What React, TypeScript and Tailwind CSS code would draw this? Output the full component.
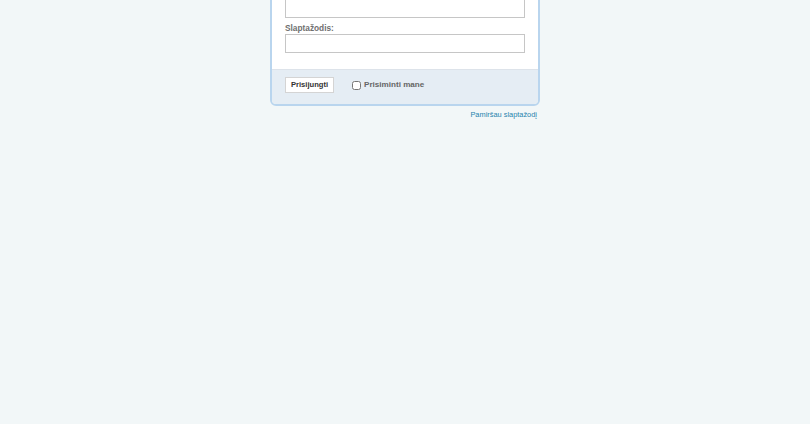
import React from "react";

export default function App() {
  return (
    <div
      className="w-[810px] h-[424px] bg-[#f2f7f8] overflow-hidden"
      style={{ fontFamily: '"Liberation Sans", Arial, sans-serif' }}
    >
      <div className="ml-[270px] w-[270px] -mt-[32px]">
        <div className="border-2 border-[#b9d5ee] rounded-b-[6px] overflow-hidden">
          <div className="bg-white px-[13px] pb-[16px]">
            <div className="h-[29px]"></div>
            <input className="block w-[240px] h-[19px] border border-[#c6c6c6] bg-white outline-none" />
            <label className="block text-[8.3px] leading-[12px] font-bold text-[#6f6f6f] mt-[2px] h-[12px] pt-[2px]">
              Slaptažodis:
            </label>
            <input type="password" className="block w-[240px] h-[19px] border border-[#c6c6c6] bg-white mt-[2px] outline-none" />
          </div>
          <div className="bg-[#e5edf4] border-t border-[#dde3ea] px-[13px] h-[35px] flex items-start pt-[7px]">
            <button className="w-[49px] h-[16px] bg-white border border-[#d4d4d4] text-[7.6px] font-bold text-[#333] leading-[14px] flex justify-center whitespace-nowrap">
              Prisijungti
            </button>
            <label className="flex items-center ml-[18px] mt-[2px] text-[8.1px] font-bold text-[#666] leading-[12px]">
              <input type="checkbox" className="w-[9px] h-[9px] m-0 mr-[3px]" />
              <span className="whitespace-nowrap">Prisiminti mane</span>
            </label>
          </div>
        </div>
        <div className="text-right pr-[3px] mt-[3px] text-[7.4px] text-[#2583ad] leading-[12px] whitespace-nowrap">
          Pamiršau slaptažodį
        </div>
      </div>
    </div>
  );
}
